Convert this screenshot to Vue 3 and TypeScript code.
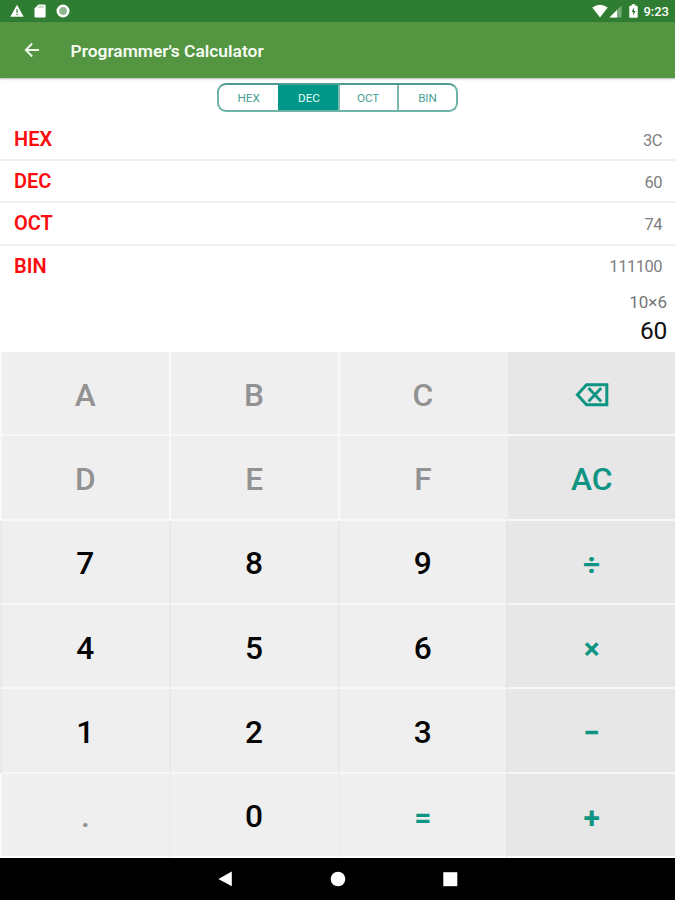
<script setup lang="ts">
import { ref } from 'vue'

type Base = 'HEX' | 'DEC' | 'OCT' | 'BIN'

interface Row {
  base: Base
  value: string
}

interface Key {
  label: string
  kind: 'digit' | 'disabled' | 'action' | 'equals'
}

const rows: Row[] = [
  { base: 'HEX', value: '3C' },
  { base: 'DEC', value: '60' },
  { base: 'OCT', value: '74' },
  { base: 'BIN', value: '111100' },
]

const active = ref<Base>('DEC')

const off = (label: string): Key => ({ label, kind: 'disabled' })
const digit = (label: string): Key => ({ label, kind: 'digit' })
const action = (label: string): Key => ({ label, kind: 'action' })

const keys: Key[] = [
  off('A'), off('B'), off('C'), action('DEL'),
  off('D'), off('E'), off('F'), action('AC'),
  digit('7'), digit('8'), digit('9'), action('÷'),
  digit('4'), digit('5'), digit('6'), action('×'),
  digit('1'), digit('2'), digit('3'), action('−'),
  off('.'), digit('0'), { label: '=', kind: 'equals' }, action('+'),
]

const rowOf = (index: number): string => {
  const row = Math.floor(index / 4)
  if (row < 2) return 'light'
  return row === 5 ? 'last' : 'shade'
}

const isSymbol = (label: string): boolean => '÷×−=+'.includes(label)
</script>

<template>
  <div class="screen">
    <header class="status">
      <div class="status-left">
        <svg width="14" height="14" viewBox="0 0 14 14">
          <path d="M7 .8 13.7 12.8H.3Z" fill="#fff" />
          <path d="M6.4 5.2h1.3v3.6H6.4zM6.4 9.8h1.3v1.3H6.4z" fill="#2f7d32" />
        </svg>
        <svg width="12" height="14" viewBox="0 0 12 14">
          <path d="M4.4.6h6.2q1 0 1 1v10.8q0 1-1 1H1.5q-1 0-1-1V4.6Z" fill="#fff" />
          <path d="M4.4 1.8h5.8v2H3.2Z" fill="#c3d9c4" />
        </svg>
        <svg width="14" height="14" viewBox="0 0 14 14">
          <circle cx="7" cy="7" r="5.2" fill="#8db88f" stroke="#fff" stroke-width="2.6" />
        </svg>
      </div>
      <div class="status-right">
        <svg class="wifi" width="16" height="14" viewBox="0 0 16 14">
          <path d="M.3 3.6Q8-2.2 15.7 3.6L8 13.4Z" fill="#fff" />
        </svg>
        <svg class="signal" width="13" height="13" viewBox="0 0 13 13">
          <path d="M12.5.5v12H.5Z" fill="#78ab7a" />
          <path d="M8 5v7.5H.5Z" fill="#fff" />
        </svg>
        <svg class="battery" width="9" height="14" viewBox="0 0 9 14">
          <path d="M2.7.3h3.6v1.5h1.4q1 0 1 1v9.9q0 1-1 1H1.3q-1 0-1-1V2.8q0-1 1-1h1.4Z" fill="#fff" />
          <path d="M5 3.4 2.6 8h1.6v3.6L6.6 7H5Z" fill="#2f7d32" />
        </svg>
        <span class="clock">9:23</span>
      </div>
    </header>

    <div class="appbar">
      <svg class="back" width="16" height="16" viewBox="0 0 16 16">
        <path d="M15 8H2M8.2 1.5 1.7 8l6.5 6.5" fill="none" stroke="#f1f8ec" stroke-width="1.8" />
      </svg>
      <h1>Programmer's Calculator</h1>
    </div>

    <main class="panel">
      <div class="tabs">
        <button
          v-for="row in rows"
          :key="row.base"
          class="tab"
          :class="{ active: active === row.base }"
          @click="active = row.base"
        >{{ row.base }}</button>
      </div>
      <div class="rows">
        <div v-for="row in rows" :key="row.base" class="row">
          <span class="base">{{ row.base }}</span>
          <span class="value">{{ row.value }}</span>
        </div>
      </div>
      <div class="expression">10×6</div>
      <div class="result">60</div>
    </main>

    <section class="keypad">
      <button
        v-for="(key, i) in keys"
        :key="key.label"
        class="key"
        :class="[key.kind, rowOf(i), { symbol: isSymbol(key.label) }]"
      >
        <svg v-if="key.label === 'DEL'" width="34" height="24" viewBox="0 0 34 24">
          <path d="M2.4 11.7 11.5 1.7H31.8V21.7H11.5Z" fill="none" stroke="#0e9483" stroke-width="3" />
          <path d="M13.5 5 26.2 18.4M26.2 5 13.5 18.4" fill="none" stroke="#0e9483" stroke-width="2.9" />
        </svg>
        <template v-else>{{ key.label }}</template>
      </button>
    </section>

    <nav class="navbar">
      <svg width="16" height="16" viewBox="0 0 16 16"><path d="M14.8.6v14.6L1.4 7.9Z" fill="#fff" /></svg>
      <svg width="16" height="16" viewBox="0 0 16 16"><circle cx="8" cy="8" r="7.3" fill="#fff" /></svg>
      <svg width="16" height="16" viewBox="0 0 16 16"><path d="M1.3 1.2h14v14h-14z" fill="#fff" /></svg>
    </nav>
  </div>
</template>

<style>
body {
  margin: 0;
  overflow: hidden;
}
</style>

<style scoped>
.screen {
  width: 675px;
  height: 900px;
  display: flex;
  flex-direction: column;
  background: #fff;
  font-family: Roboto, "Liberation Sans", sans-serif;
  overflow: hidden;
}
svg {
  display: block;
  flex: none;
}
button {
  margin: 0;
  padding: 0;
  border: 0;
  background: none;
  font: inherit;
}
.status {
  height: 22px;
  flex: none;
  box-sizing: border-box;
  padding: 0 6px 0 10px;
  display: flex;
  justify-content: space-between;
  align-items: center;
  background: #2f7d32;
}
.status-left,
.status-right {
  display: flex;
  align-items: center;
}
.status-left {
  gap: 10px;
}
.signal {
  margin-left: 1px;
}
.battery {
  margin-left: 7px;
}
.clock {
  margin-left: 5px;
  font-size: 13px;
  font-weight: 500;
  line-height: 22px;
  padding-top: 1px;
  color: #fff;
}
.appbar {
  height: 56px;
  flex: none;
  display: flex;
  align-items: center;
  padding-left: 24px;
  background: #539540;
  box-shadow: 0 1px 2px rgba(0, 0, 0, 0.3);
}
.appbar h1 {
  margin: 1px 0 0 30.5px;
  font-size: 17.4px;
  font-weight: 600;
  line-height: 24px;
  color: #f6fbf3;
}
.panel {
  height: 274px;
  flex: none;
  display: flex;
  flex-direction: column;
}
.tabs {
  box-sizing: border-box;
  width: 241px;
  height: 29px;
  margin: 5px auto 0;
  display: grid;
  grid-template-columns: repeat(4, 1fr);
  border: 2px solid #6fb3a8;
  border-top-color: #4d9c90;
  border-radius: 9px;
  overflow: hidden;
}
.tab {
  padding-top: 1px;
  font-size: 11.7px;
  letter-spacing: -0.1px;
  color: #46a093;
}
.tab + .tab {
  border-left: 2px solid #7dbbb1;
}
.tab.active {
  background: #009688;
  border-color: #009688;
  color: #e8fffb;
}
.rows {
  padding-top: 7px;
}
.row {
  box-sizing: border-box;
  height: 42.2px;
  padding: 0 13px 0 14px;
  display: flex;
  align-items: center;
  justify-content: space-between;
  border-bottom: 2px solid #eff1f1;
}
.row:last-child {
  border-bottom-color: transparent;
}
.base {
  font-size: 20px;
  font-weight: 600;
  color: #fb0d0d;
}
.value {
  padding-top: 2px;
  font-size: 16.5px;
  letter-spacing: -0.5px;
  color: #808080;
}
.expression {
  margin-top: 3px;
  padding-right: 8px;
  text-align: right;
  font-size: 17px;
  line-height: 22px;
  color: #757575;
}
.result {
  padding-right: 8px;
  text-align: right;
  font-size: 24.5px;
  line-height: 36px;
  letter-spacing: -0.3px;
  color: #111;
}
.keypad {
  height: 506px;
  flex: none;
  display: grid;
  grid-template-columns: repeat(4, 1fr);
  grid-template-rows: repeat(6, 1fr);
}
.key {
  display: flex;
  align-items: center;
  justify-content: center;
  padding-top: 4px;
  border-left: 2px solid #f9f9f9;
  border-bottom: 2px solid #f7f7f7;
  background: #efefef;
  font-size: 31.7px;
  font-weight: 500;
  color: #050505;
}
.key.shade {
  border-left-color: #e9e9e9;
}
.key.last {
  border-bottom-color: #fff;
  border-left-color: #ececec;
}
.key.last:nth-child(4n + 1) {
  border-left-color: #f9f9f9;
}
.key.disabled {
  color: #929292;
}
.key.action {
  background: #e7e7e7;
  border-left-color: #e5e5e5;
}
.key.action.light {
  border-left-color: #efefef;
}
.key.action,
.key.equals {
  color: #0e9483;
}
.key.symbol {
  padding-top: 5px;
  font-size: 30px;
  font-weight: 700;
}
.navbar {
  height: 42px;
  flex: none;
  display: flex;
  align-items: center;
  justify-content: center;
  gap: 96.5px;
  background: #000;
}
</style>
